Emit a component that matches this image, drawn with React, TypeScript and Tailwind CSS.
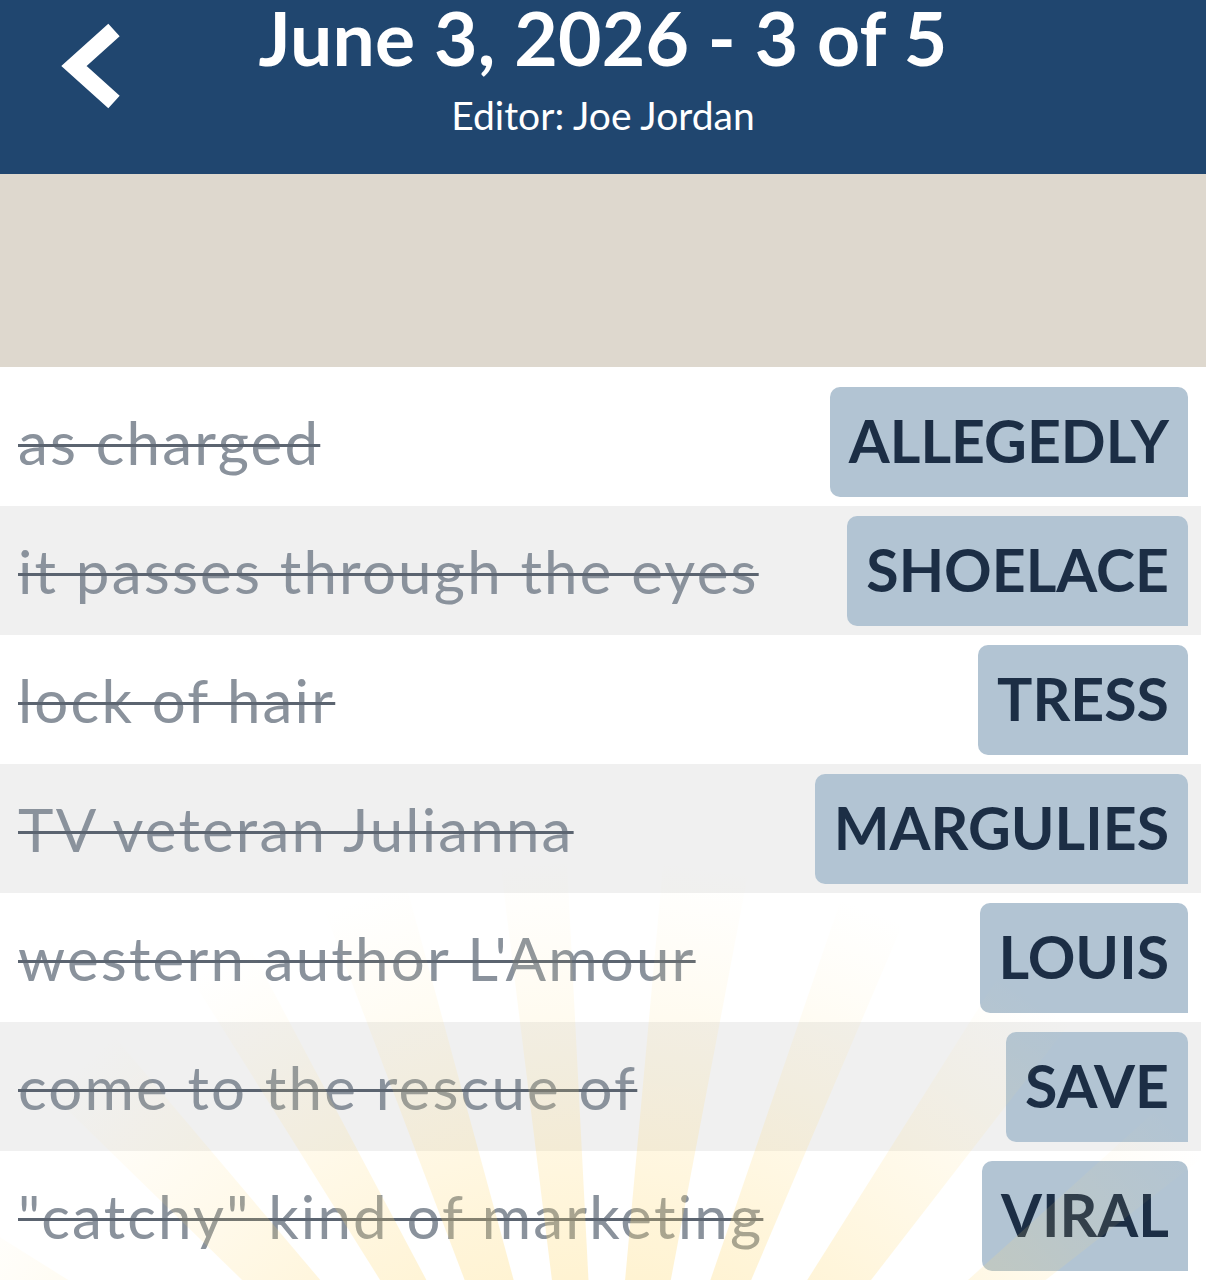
import React from 'react';

const clues = [
    { clue: 'as charged', answer: 'ALLEGEDLY' },
    { clue: 'it passes through the eyes', answer: 'SHOELACE' },
    { clue: 'lock of hair', answer: 'TRESS' },
    { clue: 'TV veteran Julianna', answer: 'MARGULIES' },
    { clue: "western author L'Amour", answer: 'LOUIS' },
    { clue: 'come to the rescue of', answer: 'SAVE' },
    { clue: '"catchy" kind of marketing', answer: 'VIRAL' },
];

const font = { fontFamily: 'Lato, "Noto Sans", sans-serif' };

function SunRays() {
    // soft wedges fanning out from a point below the screen
    const ox = 600;
    const oy = 1620;
    const rays = [-60, -43, -30, -18, -5, 8, 21, 35, 50];
    const len = 950;
    return (
        <svg className="absolute inset-0 w-full h-full pointer-events-none" viewBox="0 0 1206 1280" preserveAspectRatio="none">
            <defs>
                <linearGradient id="ray" x1="0" y1="1" x2="0" y2="0">
                    <stop offset="0" stopColor="#ffd24d" stopOpacity="0.5" />
                    <stop offset="0.45" stopColor="#ffd870" stopOpacity="0.25" />
                    <stop offset="0.8" stopColor="#ffe08a" stopOpacity="0" />
                </linearGradient>
            </defs>
            <g transform={`translate(${ox} ${oy})`}>
                {rays.map((a, i) => (
                    <polygon
                        key={i}
                        transform={`rotate(${a})`}
                        points={`-6,0 6,0 ${40 + (i % 2) * 12},${-len} ${-40 - (i % 2) * 12},${-len}`}
                        fill="url(#ray)"
                    />
                ))}
            </g>
        </svg>
    );
}

export default function App() {
    return (
        <div className="w-[1206px] h-[1280px] overflow-hidden bg-white relative" style={font}>
            {/* Header */}
            <div className="h-[174px] bg-[#20466f] relative flex flex-col items-center">
                <svg className="absolute left-[56px] top-[18px] w-[72px] h-[96px]" viewBox="0 0 72 96">
                    <polyline points="58,12 18,48 58,84" fill="none" stroke="white" strokeWidth="17" strokeLinejoin="miter" />
                </svg>
                <h1 className="text-white font-bold text-[75px] tracking-[0.3px] leading-[70px] mt-[2px]">June 3, 2026 - 3 of 5</h1>
                <p className="text-white text-[39px] leading-none mt-[24px]">Editor: Joe Jordan</p>
            </div>

            {/* Banner area */}
            <div className="h-[193px] bg-[#ded8ce]" />

            {/* Clue list */}
            <div className="pt-[10px] w-[1201px]">
                {clues.map((c, i) => (
                    <div
                        key={c.answer}
                        className={`h-[129px] flex items-center justify-between pl-[18px] pr-[13px] ${i % 2 === 1 ? 'bg-[#f0f0f0]' : 'bg-white'}`}
                    >
                        <span className="text-[60px] tracking-[2.2px] text-[#8a929c] line-through decoration-[#5b6470] decoration-[3px] whitespace-nowrap">
                            {c.clue}
                        </span>
                        <div className="h-[110px] px-[19px] flex items-center bg-[#b2c4d3] rounded-tl-[10px] rounded-tr-[10px] rounded-bl-[10px]">
                            <span className="text-[59px] font-bold text-[#1c2e45]">{c.answer}</span>
                        </div>
                    </div>
                ))}
            </div>

            <SunRays />
        </div>
    );
}
